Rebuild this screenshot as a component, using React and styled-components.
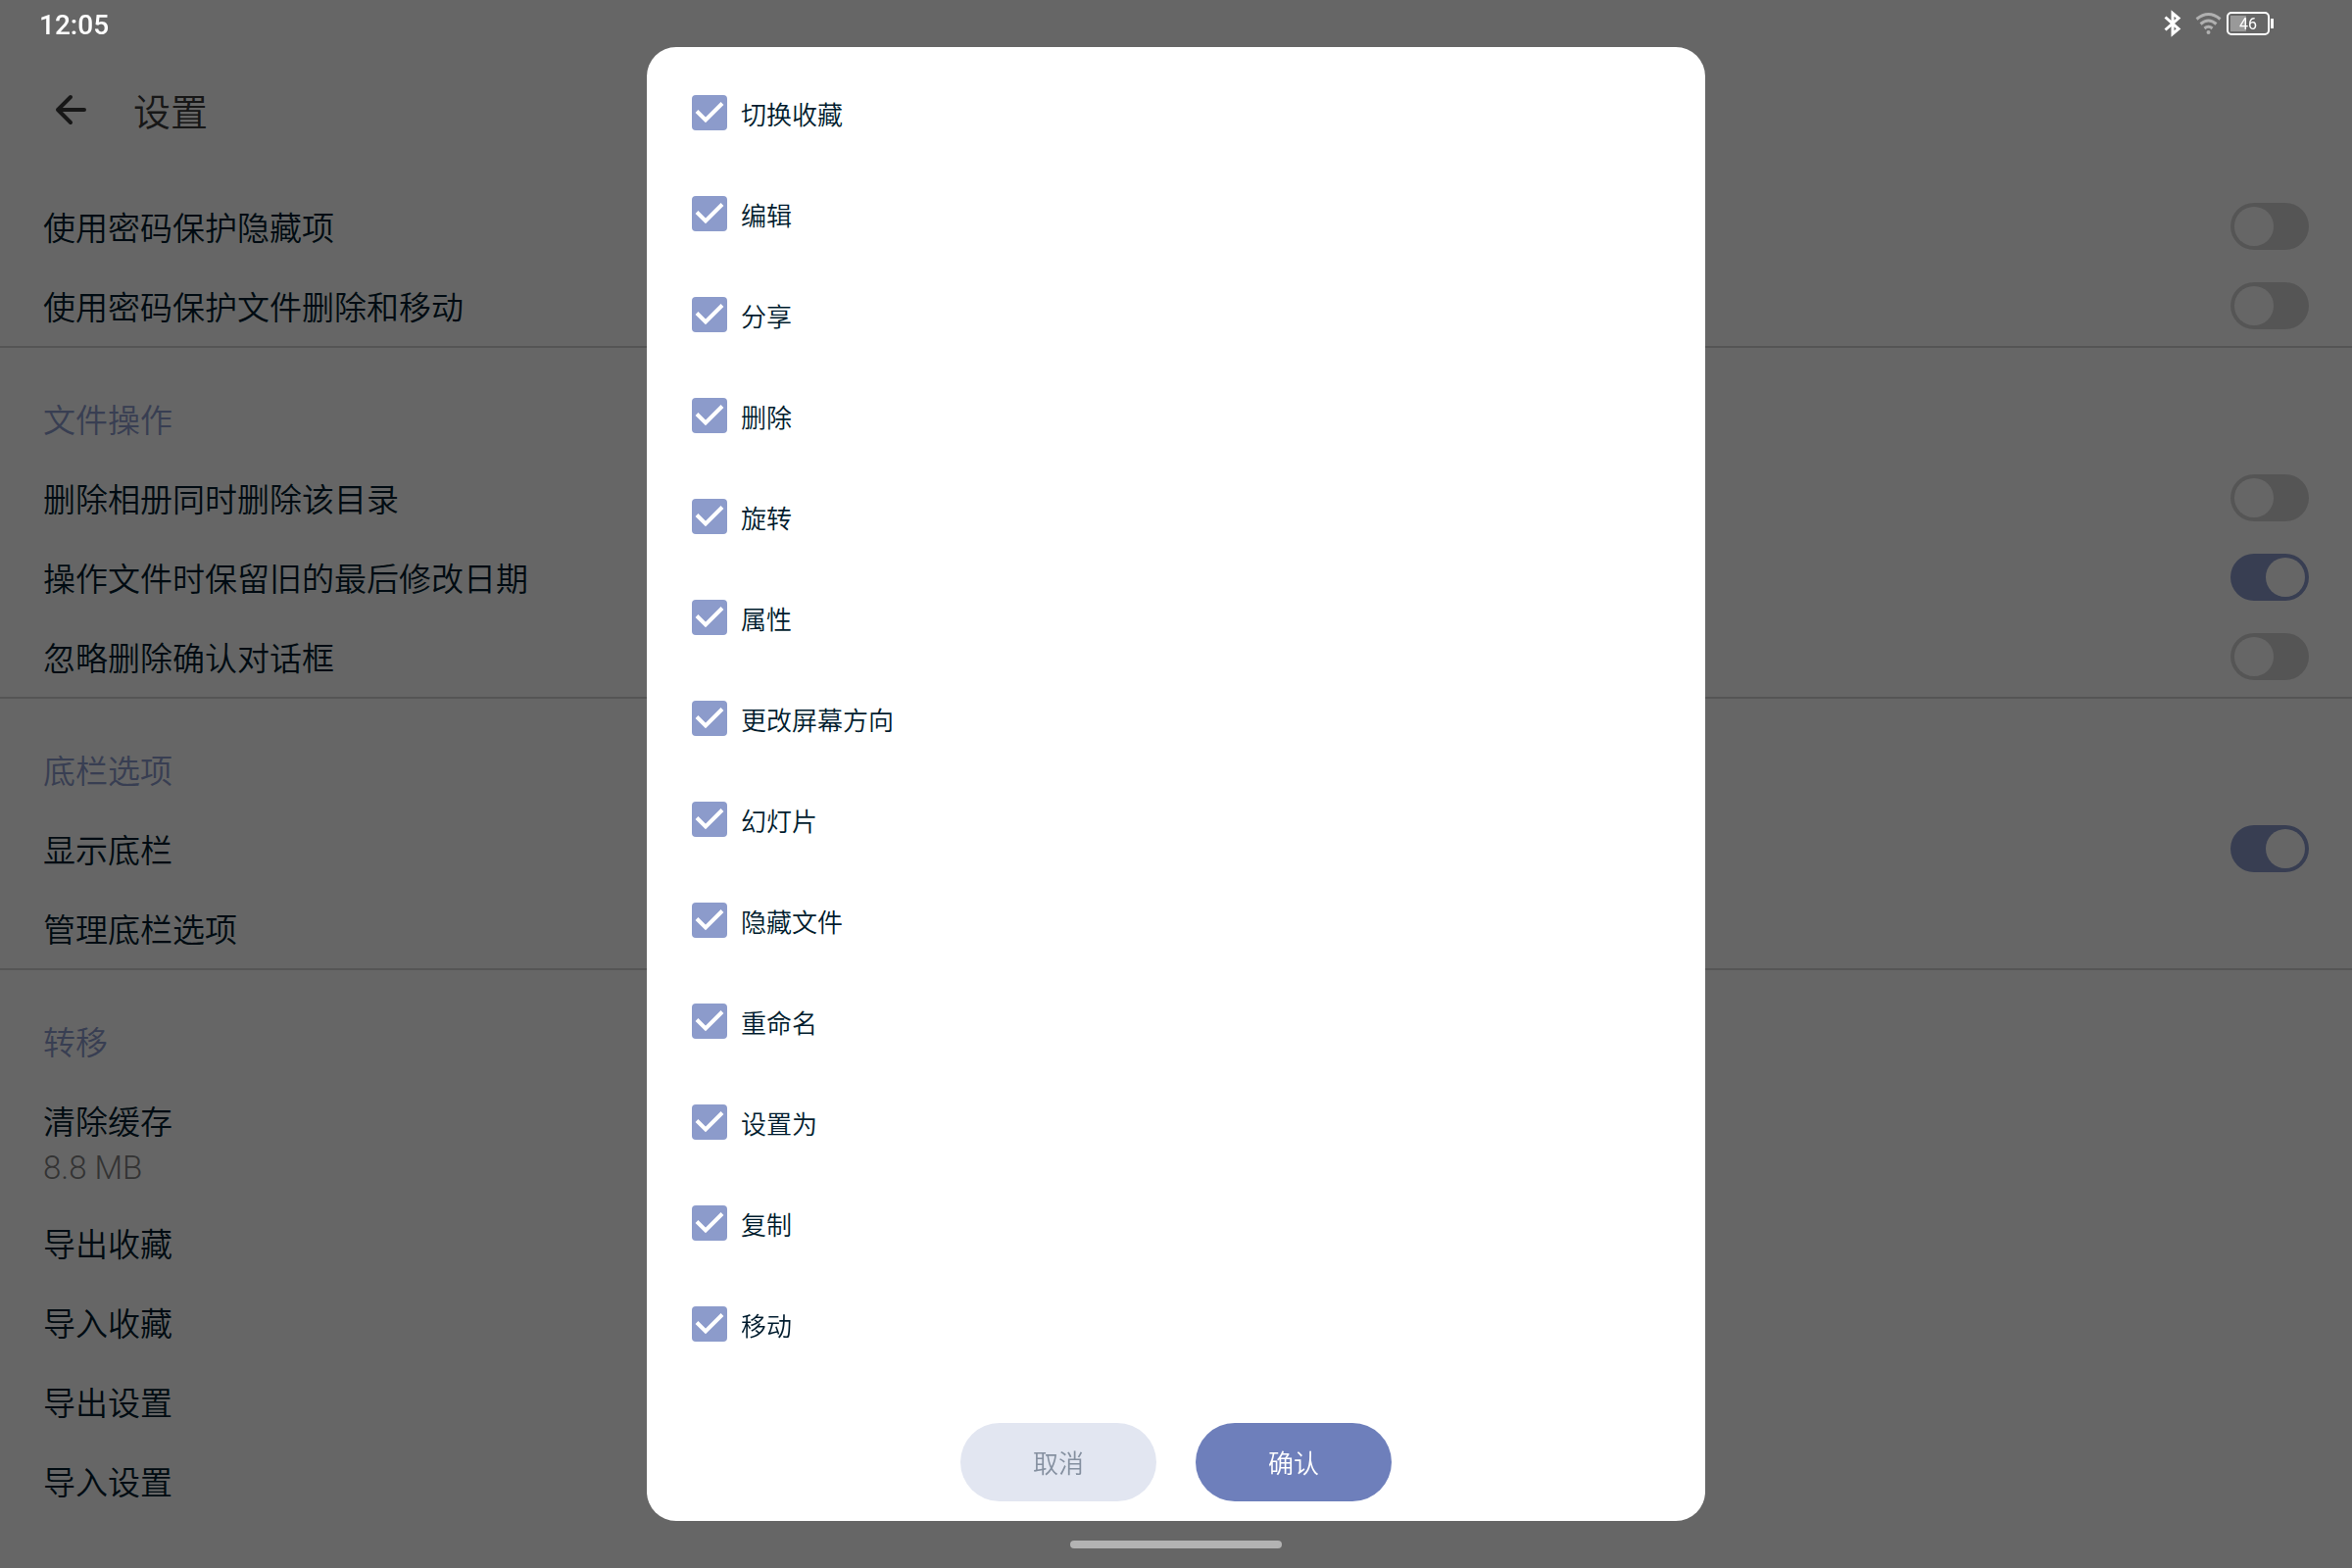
import React from "react";
import styled, { createGlobalStyle } from "styled-components";

const GlobalStyle = createGlobalStyle`
  * {
    box-sizing: border-box;
  }
  body {
    margin: 0;
    background: #ffffff;
    color: #001c2e;
    font-family: Roboto, "Noto Sans CJK SC", sans-serif;
    font-weight: 350;
  }
  button,
  input {
    margin: 0;
    font-family: inherit;
    font-weight: inherit;
  }
`

const Page = styled.div`
  min-height: 100vh;
`
const StatusBar = styled.header`
  position: relative;
  z-index: 2;
  display: flex;
  justify-content: space-between;
  height: 48px;
  padding: 0 80px 0 40px;
  color: #ffffff;
`
const Clock = styled.span`
  font-size: 28px;
  font-weight: 500;
  line-height: 52px;
`
const StatusIcons = styled.div`
  display: flex;
  align-items: center;
  gap: 4px;
`
const AppBar = styled.div`
  display: flex;
  align-items: center;
  gap: 44px;
  height: 143px;
  padding: 0 52px 16px;
`
const BackButton = styled.button`
  display: flex;
  width: 40px;
  height: 40px;
  padding: 0;
  border: none;
  background: none;
  color: #3a3a3a;
`
const Title = styled.h1`
  margin: 0;
  padding-top: 6px;
  color: #3a3a3a;
  font-size: 38px;
  font-weight: inherit;
  line-height: 48px;
`
const Section = styled.section`
  & + & {
    border-top: 2px solid #d5d5d5;
  }
`
const SectionTitle = styled.h2`
  margin: 0;
  padding: 37px 44px 0;
  color: #8c9bcd;
  font-size: 33px;
  font-weight: inherit;
  line-height: 76px;
`
const SettingRow = styled.label`
  display: flex;
  align-items: center;
  justify-content: space-between;
  height: 81px;
  padding: 0 44px 1px;
  font-size: 33px;
  line-height: 48px;
`
const RowText = styled.span`
  padding-top: 6px;
`
const Summary = styled.p`
  margin: 0;
  padding: 0 44px 28px;
  color: #808080;
  font-size: 33px;
  font-weight: 300;
  line-height: 16px;
`
const Switch = styled.input`
  appearance: none;
  display: flex;
  justify-content: ${(props) => (props.checked ? "flex-end" : "flex-start")};
  width: 80px;
  height: 48px;
  padding: 4px;
  border-radius: 24px;
  background: ${(props) => (props.checked ? "#8c9bcd" : "#d5d5d5")};

  &::before {
    content: "";
    width: 40px;
    height: 40px;
    border-radius: 50%;
    background: #ffffff;
  }
`
const Scrim = styled.div`
  position: fixed;
  inset: 0;
  z-index: 1;
  display: flex;
  flex-direction: column;
  align-items: center;
  padding-top: 48px;
  background: rgba(0, 0, 0, 0.6);
`
const Dialog = styled.div`
  width: 45%;
  padding: 16px 46px 20px;
  border-radius: 30px;
  background: #ffffff;
`
const OptionList = styled.ul`
  margin: 0;
  padding: 0;
  list-style: none;
`
const Option = styled.label`
  display: flex;
  align-items: center;
  gap: 14px;
  height: 103px;
  padding-bottom: 1px;
  font-size: 26px;
  line-height: 40px;
`
const CheckboxBox = styled.span`
  display: grid;

  & > * {
    grid-area: 1 / 1;
  }
`
const Checkbox = styled.input`
  appearance: none;
  width: 36px;
  height: 36px;
  border-radius: 4px;
  background: ${(props) => (props.checked ? "#8c9bcb" : "#d5d5d5")};
`
const CheckMark = styled.svg`
  pointer-events: none;
`
const OptionText = styled.span`
  padding-top: 6px;
`
const Actions = styled.div`
  display: flex;
  justify-content: center;
  gap: 40px;
  padding-top: 49px;
`
const ActionButton = styled.button`
  width: 200px;
  height: 80px;
  padding: 0 0 2px;
  border: none;
  border-radius: 40px;
  background: ${(props) => (props.$primary ? "#6e7fbb" : "#e2e6f1")};
  color: ${(props) => (props.$primary ? "#ffffff" : "#8590a0")};
  font-size: 26px;
`
const HomeHandle = styled.div`
  width: 9%;
  height: 8px;
  margin-top: 20px;
  border-radius: 4px;
  background: #b3b3b3;
`

const sections = [
  {
    rows: [
      { label: "使用密码保护隐藏项", on: false },
      { label: "使用密码保护文件删除和移动", on: false },
    ],
  },
  {
    title: "文件操作",
    rows: [
      { label: "删除相册同时删除该目录", on: false },
      { label: "操作文件时保留旧的最后修改日期", on: true },
      { label: "忽略删除确认对话框", on: false },
    ],
  },
  {
    title: "底栏选项",
    rows: [{ label: "显示底栏", on: true }, { label: "管理底栏选项" }],
  },
  {
    title: "转移",
    rows: [
      { label: "清除缓存", summary: "8.8 MB" },
      { label: "导出收藏" },
      { label: "导入收藏" },
      { label: "导出设置" },
      { label: "导入设置" },
    ],
  },
]

const actionNames = [
  "切换收藏",
  "编辑",
  "分享",
  "删除",
  "旋转",
  "属性",
  "更改屏幕方向",
  "幻灯片",
  "隐藏文件",
  "重命名",
  "设置为",
  "复制",
  "移动",
]

function BluetoothIcon() {
  return (
    <svg width="32" height="28" viewBox="0 0 32 28" fill="none" stroke="currentColor" strokeWidth="3">
      <path d="M5.500 7.500 L19 19.500 L13 24.500 V3.500 L19 8.500 L5.500 20.500" />
    </svg>
  )
}

function WifiIcon() {
  return (
    <svg width="28" height="28" viewBox="0 0 28 28" fill="none" stroke="#b0b0b0" strokeWidth="3">
      <path d="M1.500 9.500 Q13.500 -0.500 25.500 9.500" />
      <path d="M5.500 14.500 Q13.500 7.500 21.500 14.500" />
      <path d="M9.500 19 Q13.500 15.500 17.500 19" />
      <circle cx="13.500" cy="23" r="2" fill="#b0b0b0" stroke="none" />
    </svg>
  )
}

function BatteryIcon() {
  return (
    <svg width="48" height="24" viewBox="0 0 48 24">
      <rect x="4" y="4" width="16" height="16" fill="#999999" />
      <rect x="1" y="1" width="42" height="22" rx="4" fill="none" stroke="#ffffff" strokeWidth="2" />
      <rect x="45" y="7" width="3" height="10" fill="#ffffff" />
      <text x="22" y="18" textAnchor="middle" fill="#ffffff" fontSize="16" fontWeight="400">46</text>
    </svg>
  )
}

export default function App() {
  const [settings, setSettings] = React.useState(() => {
    const initial = {}
    sections.forEach((section) =>
      section.rows.forEach((row) => {
        initial[row.label] = row.on
      })
    )
    return initial
  })
  const [actions, setActions] = React.useState(actionNames)

  const toggleSetting = (label) => {
    setSettings((prev) => ({ ...prev, [label]: !prev[label] }))
  }
  const toggleAction = (name) => {
    setActions((prev) =>
      prev.includes(name) ? prev.filter((item) => item !== name) : [...prev, name]
    )
  }

  return (
    <Page lang="zh-CN">
      <GlobalStyle />
      <StatusBar>
        <Clock>12:05</Clock>
        <StatusIcons>
          <BluetoothIcon />
          <WifiIcon />
          <BatteryIcon />
        </StatusIcons>
      </StatusBar>

      <AppBar>
        <BackButton aria-label="返回">
          <svg width="40" height="40" viewBox="0 0 40 40" fill="none" stroke="currentColor" strokeWidth="4" strokeLinecap="round" strokeLinejoin="round">
            <path d="M20 7 L7 20 L20 33 M7 20 H34" />
          </svg>
        </BackButton>
        <Title>设置</Title>
      </AppBar>

      <main>
        {sections.map((section, index) => (
          <Section key={index}>
            {section.title && <SectionTitle>{section.title}</SectionTitle>}
            {section.rows.map((row) => (
              <React.Fragment key={row.label}>
                <SettingRow as={row.on === undefined ? "div" : "label"}>
                  <RowText>{row.label}</RowText>
                  {row.on !== undefined && (
                    <Switch
                      type="checkbox"
                      role="switch"
                      checked={settings[row.label]}
                      onChange={() => toggleSetting(row.label)}
                    />
                  )}
                </SettingRow>
                {row.summary && <Summary>{row.summary}</Summary>}
              </React.Fragment>
            ))}
          </Section>
        ))}
      </main>

      <Scrim>
        <Dialog role="dialog" aria-modal="true" aria-label="管理底栏选项">
          <OptionList>
            {actionNames.map((name) => (
              <li key={name}>
                <Option>
                  <CheckboxBox>
                    <Checkbox
                      type="checkbox"
                      checked={actions.includes(name)}
                      onChange={() => toggleAction(name)}
                    />
                    <CheckMark width="36" height="36" viewBox="0 0 36 36" fill="none" stroke="#ffffff" strokeWidth="4">
                      <path d="M5 16.500 L14 25.500 L31 8.500" />
                    </CheckMark>
                  </CheckboxBox>
                  <OptionText>{name}</OptionText>
                </Option>
              </li>
            ))}
          </OptionList>
          <Actions>
            <ActionButton type="button">取消</ActionButton>
            <ActionButton type="button" $primary>确认</ActionButton>
          </Actions>
        </Dialog>
        <HomeHandle />
      </Scrim>
    </Page>
  )
}
